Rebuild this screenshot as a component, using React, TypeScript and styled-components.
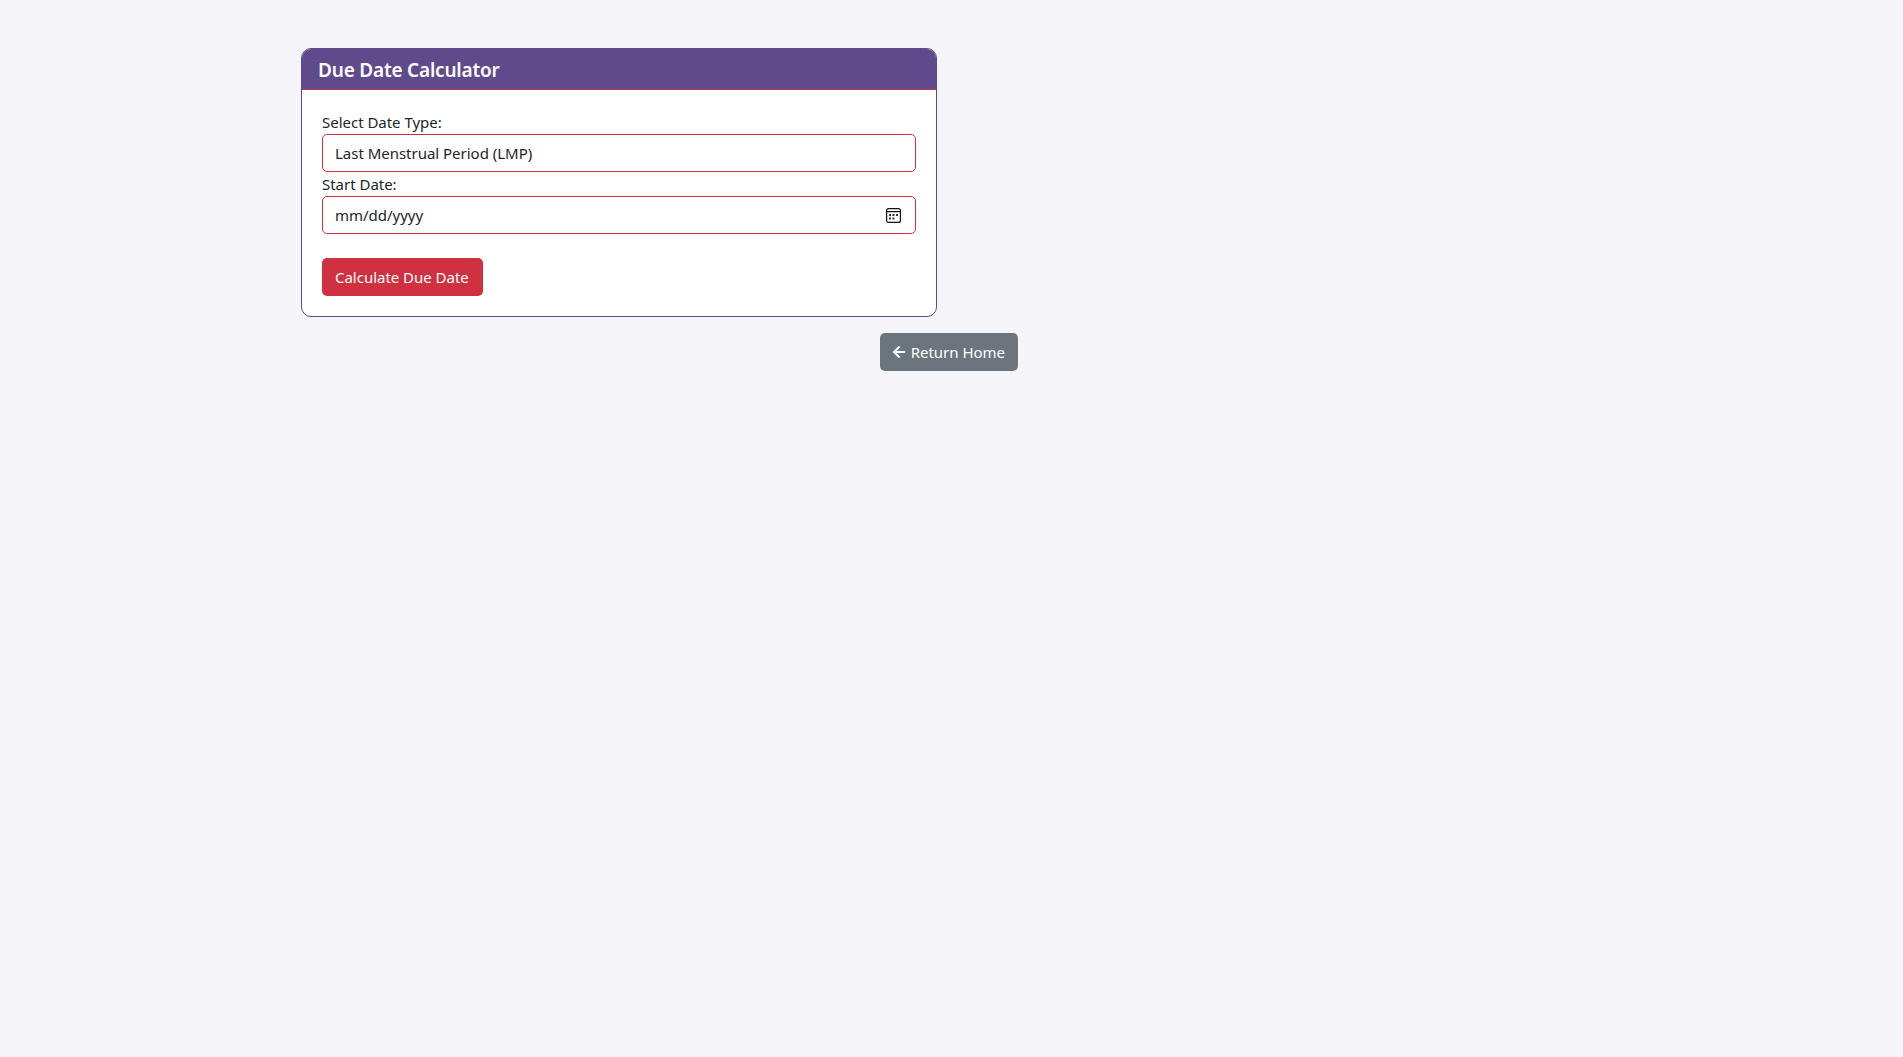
import React from 'react';
import styled, { createGlobalStyle } from 'styled-components';
import { FaArrowLeft } from 'react-icons/fa';

const GlobalStyle = createGlobalStyle`
    html, body {
        margin: 0;
        padding: 0;
        min-height: 100vh;
        background-color: #f4f4f9;
        font-family: 'Noto Sans', 'Open Sans', sans-serif;
        font-size: 16px;
        color: #212529;
    }
    * {
        box-sizing: border-box;
    }
`;

const Page = styled.div`
    width: 717px;
    margin-left: 301px;
    padding-top: 48px;
    display: flex;
    flex-direction: column;
`;

const Card = styled.section`
    width: 636px;
    height: 269px;
    background-color: #fff;
    border: 1px solid #5f4b8b;
    border-radius: 10px;
    overflow: hidden;
`;

const CardHeader = styled.h2`
    margin: -1px -1px 0;
    height: 42px;
    padding: 2px 17px 0;
    display: flex;
    align-items: center;
    background-color: #5f4b8b;
    border-bottom: 1px solid #cf3140;
    color: #fff;
    font-size: 19px;
    font-weight: 600;
    letter-spacing: -0.2px;
`;

const Form = styled.form`
    padding: 20px;
    display: flex;
    flex-direction: column;
`;

const Label = styled.label`
    display: block;
    height: 24px;
    line-height: 24px;
    font-size: 15px;
    letter-spacing: -0.02px;
`;

const Field = styled.div`
    height: 38px;
    padding: 0 14px 0 12px;
    display: flex;
    align-items: center;
    justify-content: space-between;
    background-color: #fff;
    border: 1px solid #cf3140;
    border-radius: 5px;
    font-size: 15px;
    letter-spacing: -0.02px;
`;

const Button = styled.button<{ $tone: 'red' | 'gray' }>`
    height: 38px;
    display: inline-flex;
    align-items: center;
    gap: 5px;
    border: none;
    border-radius: 5px;
    background-color: ${(props) => (props.$tone === 'red' ? '#cf3140' : '#6c757d')};
    color: #fff;
    font-family: inherit;
    font-size: 15px;
    letter-spacing: -0.02px;
    cursor: pointer;
`;

const SubmitButton = styled(Button)`
    align-self: flex-start;
    margin-top: 24px;
    padding: 0 14px 0 13px;
`;

const HomeButton = styled(Button)`
    align-self: flex-end;
    margin-top: 16px;
    padding: 0 13px 0 12px;
`;

const CalendarIcon = () => (
    <svg width="15" height="15" viewBox="0 0 15 15" fill="none">
        <rect x="0.6" y="0.6" width="13.8" height="13.8" rx="2" stroke="#111" strokeWidth="1.2" />
        <path d="M1 3.6h13" stroke="#111" strokeWidth="1.2" />
        <path d="M3 6h2v2H3zM6.5 6h2v2h-2zM10 6h2v2h-2zM3 9.5h2v2H3zM6.5 9.5h2v2h-2z" fill="#333" />
    </svg>
);

const App = () => (
    <Page>
        <GlobalStyle />
        <Card>
            <CardHeader>Due Date Calculator</CardHeader>
            <Form>
                <Label>Select Date Type:</Label>
                <Field>Last Menstrual Period (LMP)</Field>
                <Label>Start Date:</Label>
                <Field>
                    mm/dd/yyyy
                    <CalendarIcon />
                </Field>
                <SubmitButton $tone="red" type="button">Calculate Due Date</SubmitButton>
            </Form>
        </Card>
        <HomeButton $tone="gray" type="button">
            <FaArrowLeft size={14} />
            Return Home
        </HomeButton>
    </Page>
);

export default App;
